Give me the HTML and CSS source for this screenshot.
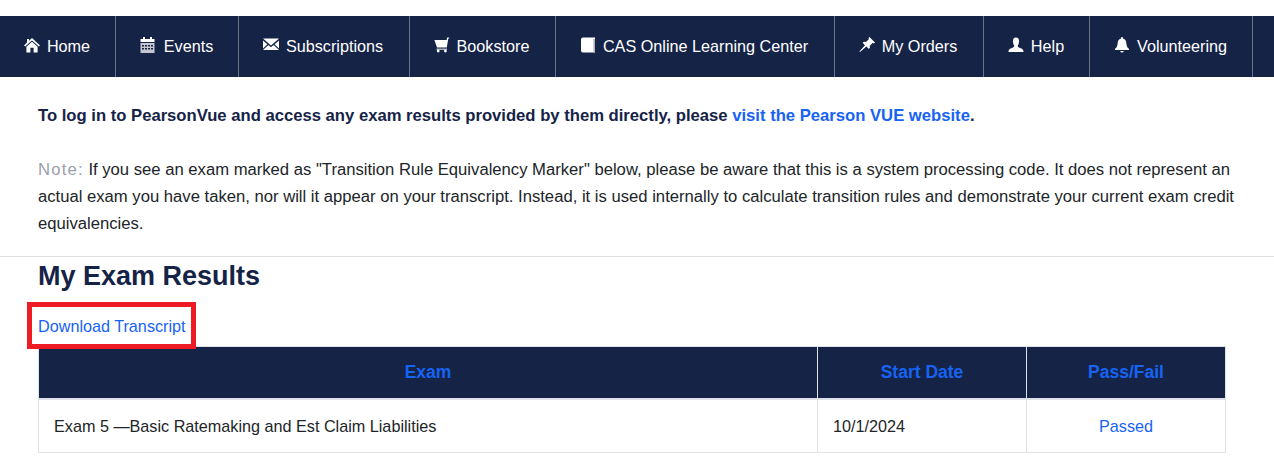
FILE: index.html
```html
<!DOCTYPE html>
<html lang="en">
<head>
  <meta charset="UTF-8">
  <title>My Exam Results</title>
  <link rel="stylesheet" href="styles.css">
</head>
<body>
  <!-- top nav -->
  <nav class="nav">
    <a class="nav-item nav-home" href="#">
      <svg class="icon" viewBox="0 0 16 16"><path d="M8 1 L16 8.4 L14.8 9.6 L8 3.4 L1.2 9.6 L0 8.4 L3 5.6 V2 H5 V3.8 Z M8 4.8 L13.6 9.8 V15.5 H9.6 V10.8 H6.4 V15.5 H2.4 V9.8 Z"/></svg>
      <span>Home</span>
    </a>
    <a class="nav-item nav-events" href="#">
      <svg class="icon" viewBox="0 0 16 16"><path d="M3 0 H5 V2 H10 V0 H12 V2 H14.5 V5 H0.5 V2 H3 Z"/><path opacity=".75" fill-rule="evenodd" d="M0.5 6 H14.5 V16 H0.5 Z M2 8 V9.4 H4 V8 Z M5 8 V9.4 H7 V8 Z M8 8 V9.4 H10 V8 Z M11 8 V9.4 H13 V8 Z M2 11 V12.4 H4 V11 Z M5 11 V12.4 H7 V11 Z M8 11 V12.4 H10 V11 Z M11 11 V12.4 H13 V11 Z"/></svg>
      <span>Events</span>
    </a>
    <a class="nav-item nav-subs" href="#">
      <svg class="icon" viewBox="0 0 16 16"><path d="M0 1.5 H16 L8 8.4 Z M0 3.4 L4.4 7.2 L0 11.4 Z M16 3.4 V11.4 L11.6 7.2 Z M5.4 8 L8 10.2 L10.6 8 L16 13 H0 Z"/></svg>
      <span>Subscriptions</span>
    </a>
    <a class="nav-item nav-books" href="#">
      <svg class="icon" viewBox="0 0 16 16"><path d="M15.5 0.5 L14.2 2 L12.8 10.6 H3 L0.4 3 H12.6 L13.2 0.5 Z"/><path d="M2.5 11.6 H13 V12.8 H2.5 Z" opacity=".8"/><circle cx="4.2" cy="14" r="1.4"/><circle cx="11.4" cy="14" r="1.4"/></svg>
      <span>Bookstore</span>
    </a>
    <a class="nav-item nav-learn" href="#">
      <svg class="icon" viewBox="0 0 16 16"><path d="M3 0.5 H15 V15.5 H3 Q1 15.5 1 13.5 V2.5 Q1 0.5 3 0.5 Z"/><path fill="#aeb3bf" d="M13.4 2 H15 V15.5 H13.4 Z"/></svg>
      <span>CAS Online Learning Center</span>
    </a>
    <a class="nav-item nav-orders" href="#">
      <svg class="icon" viewBox="0 0 16 16"><path d="M10.4 0 L16 5.4 L14.8 6.4 L13.8 5.8 L10.8 8.8 Q11.4 10.8 10 12 L7.4 9.4 L1 15 L0.4 14.6 L6 8.2 L3.6 5.8 Q5 4.4 7 5 L10 2 L9.4 1 Z"/></svg>
      <span>My Orders</span>
    </a>
    <a class="nav-item nav-help" href="#">
      <svg class="icon" viewBox="0 0 16 16"><path d="M8 0.5 C10.6 0.5 11.2 2.6 11 5 C10.9 6.6 10.2 8 9.8 8.8 C9.8 10 10.4 10.4 12 11 C14 11.8 15.6 12.4 15.6 15 H0.4 C0.4 12.4 2 11.8 4 11 C5.6 10.4 6.2 10 6.2 8.8 C5.8 8 5.1 6.6 5 5 C4.8 2.6 5.4 0.5 8 0.5 Z"/></svg>
      <span>Help</span>
    </a>
    <a class="nav-item nav-vol" href="#">
      <svg class="icon" viewBox="0 0 16 16"><path d="M8 0 Q9 0 9 1.4 C11.4 2 12.2 4 12.4 6.4 C12.6 9 13.4 10.6 15 11.8 V13 H1 V11.8 C2.6 10.6 3.4 9 3.6 6.4 C3.8 4 4.6 2 7 1.4 Q7 0 8 0 Z M6.2 14 H9.8 Q9.4 15.6 8 15.6 Q6.6 15.6 6.2 14 Z"/></svg>
      <span>Volunteering</span>
    </a>
  </nav>

  <section class="notice">
    <p class="notice-login">To log in to PearsonVue and access any exam results provided by them directly, please <a href="#">visit the Pearson VUE website</a>.</p>
    <p class="notice-note"><span class="note-label">Note:</span> If you see an exam marked as "Transition Rule Equivalency Marker" below, please be aware that this is a system processing code. It does not represent an actual exam you have taken, nor will it appear on your transcript. Instead, it is used internally to calculate transition rules and demonstrate your current exam credit equivalencies.</p>
  </section>

  <main class="results">
    <h1>My Exam Results</h1>
    <div class="transcript">
      <a href="#">Download Transcript</a>
      <span class="highlight"></span>
    </div>
    <table class="exams">
      <thead>
        <tr>
          <th class="col-exam">Exam</th>
          <th class="col-date">Start Date</th>
          <th class="col-pass">Pass/Fail</th>
        </tr>
      </thead>
      <tbody>
        <tr>
          <td>Exam 5 —Basic Ratemaking and Est Claim Liabilities</td>
          <td>10/1/2024</td>
          <td class="pass"><a href="#">Passed</a></td>
        </tr>
      </tbody>
    </table>
  </main>
</body>
</html>
```

FILE: styles.css
```css
html, body {
  margin: 0;
  background: #fff;
  font-family: "Liberation Sans", Arial, sans-serif;
  font-size: 16px;
  color: #212529;
  overflow: hidden;
}

a {
  color: #1763f3;
  text-decoration: none;
}

.nav {
  display: flex;
  height: 61px;
  margin-top: 16px;
  background: #152347;
}

.nav-item {
  display: flex;
  align-items: center;
  box-sizing: border-box;
  height: 100%;
  justify-content: center;
  gap: 7px;
  padding-right: 2px;
  color: #fff;
  font-size: 16.2px;
  border-right: 1px solid #6d7382;
}

.icon {
  flex: none;
  width: 16px;
  height: 16px;
  fill: #fff;
  margin-top: -4px;
}

.nav-home { width: 116px; padding-right: 1px; }
.nav-events { width: 123px; gap: 8px; padding-right: 1px; }
.nav-subs { width: 171px; }
.nav-books { width: 146px; }
.nav-learn { width: 279px; }
.nav-orders { width: 149px; }
.nav-help { width: 106px; padding-right: 1px; }
.nav-vol { width: 163px; padding-right: 1px; }

.notice {
  padding: 25px 30px 19px 38px;
  border-bottom: 1px solid #dfdfdf;
}

.notice p {
  margin: 0;
  line-height: 27px;
  font-size: 16.65px;
}

.notice .notice-login {
  font-weight: 700;
  color: #152347;
  margin-bottom: 27px;
}

.note-label {
  color: #9a9fae;
  letter-spacing: 1.2px;
}

.results {
  padding: 0 48px 0 38px;
}

h1 {
  margin: 0;
  padding-top: 1px;
  font-size: 27px;
  line-height: 36px;
  font-weight: 700;
  color: #152347;
}

.transcript {
  position: relative;
  padding-top: 22px;
  height: 30px;
  line-height: 20px;
  font-size: 16.2px;
}

.highlight {
  position: absolute;
  left: -11px;
  top: 8px;
  width: 159px;
  height: 37px;
  border: 5px solid #ed1c24;
}

.exams {
  width: 100%;
  table-layout: fixed;
  border-collapse: collapse;
}

.exams th {
  height: 51px;
  padding: 0;
  background: #152347;
  color: #1763f3;
  font-size: 17.5px;
  font-weight: 700;
  text-align: center;
  border: 1px solid #dee2e6;
  border-bottom-width: 2px;
}

.col-exam { width: 778px; }
.col-date { width: 208px; }

.exams td {
  height: 52px;
  padding: 0 15px;
  font-size: 16.2px;
  border: 1px solid #dee2e6;
}

.exams td.pass {
  text-align: center;
}
```
